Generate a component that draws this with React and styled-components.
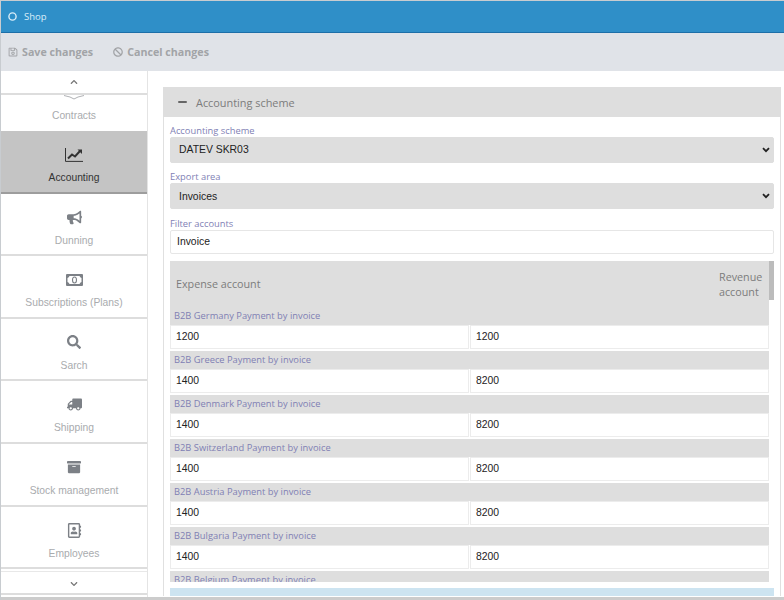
import React from "react";
import styled, { createGlobalStyle } from "styled-components";
import {
  FaRegSave, FaBan, FaChevronUp, FaChevronDown, FaBullhorn,
  FaSearch, FaTruck, FaArchive, FaRegAddressBook,
} from "react-icons/fa";

const Global = createGlobalStyle`
  html, body { margin: 0; padding: 0; background: #fff; }
  * { box-sizing: border-box; }
`;

const selectArrow = `url("data:image/svg+xml,%3Csvg xmlns='http://www.w3.org/2000/svg' width='8' height='6' viewBox='0 0 8 6'%3E%3Cpath d='M1 1.2 L4 4.2 L7 1.2' fill='none' stroke='%23222' stroke-width='1.8'/%3E%3C/svg%3E")`;

const Page = styled.div`
  width: 784px; height: 600px; overflow: hidden; display: flex; flex-direction: column;
  border-top: 1px solid #c8ccd0; border-left: 1px solid #c8ccd0;
  font-family: "Open Sans", sans-serif; background: #fff;
`;
const TitleBar = styled.div`
  height: 32px; flex: none; display: flex; align-items: center; gap: 6px; padding: 0 0 0 6px;
  background: #2f8fc8; border-bottom: 1px solid #1d6fa8; color: #d9edf8; font-size: 9.5px;
`;
const Toolbar = styled.div`
  height: 38px; flex: none; display: flex; align-items: center; gap: 20px; padding: 0 0 1px 7px;
  background: #e0e3e8;
`;
const ToolButton = styled.div`
  display: flex; align-items: center; gap: 4px; color: #a2a4a7; font-size: 10.7px; font-weight: 700;
`;
const Body = styled.div`flex: 1; min-height: 0; display: flex;`;
const Sidebar = styled.div`
  width: 147px; flex: none; display: flex; flex-direction: column; border-right: 1px solid #e4e4e4;
`;
const ArrowButton = styled.div`
  flex: none; height: ${p => p.$h}px; display: flex; align-items: center; justify-content: center;
  color: #777; font-size: 8px; border-bottom: 2px solid #ddd; background: #fff;
  margin-top: ${p => p.$mt || 0}px;
  ${p => p.$mt ? "border-top: 1px solid #e8e8e8; padding-top: 2px;" : ""}
`;
const ClipItem = styled.div`
  flex: none; height: 36px; overflow: hidden; display: flex; flex-direction: column;
  align-items: center; justify-content: space-between; padding-bottom: 10px;
  color: #a9abae; font-family: "Liberation Sans", sans-serif; font-size: 10.3px;
`;
const NavItem = styled.div`
  flex: none; height: 62.6px; display: flex; flex-direction: column; align-items: center;
  padding-top: 15px; gap: 9px; font-family: "Liberation Sans", sans-serif; font-size: 10.3px; line-height: 12px;
  color: ${p => p.$active ? "#333" : "#a9abae"};
  background: ${p => p.$active ? "#c4c4c4" : "#fff"};
  border-bottom: 2px solid ${p => p.$active ? "#9d9d9d" : "#ddd"};
`;
const NavIcon = styled.span`
  height: 17px; display: flex; align-items: center; justify-content: center;
  color: ${p => p.$active ? "#333" : "#7c8086"};
  transform: ${p => p.$flip ? "scaleX(-1)" : "none"};
`;
const Content = styled.div`
  flex: 1; min-width: 0; padding: 16px 3px 1px 15px;
`;
const Panel = styled.div`
  height: 100%; border-left: 1px solid #e0e0e0; border-right: 1px solid #e0e0e0;
  display: flex; flex-direction: column;
`;
const PanelHead = styled.div`
  flex: none; height: 30px; margin-left: -1px; margin-right: -1px; display: flex; align-items: center;
  gap: 9px; padding-left: 15px; background: #dedede; color: #7c7c7c; font-size: 10.9px;
`;
const MinusMark = styled.span`
  width: 9px; height: 2.5px; border-radius: 1px; background: #666;
`;
const PanelBody = styled.div`
  flex: 1; min-height: 0; padding: 6px 6px 0; display: flex; flex-direction: column;
`;
const FieldLabel = styled.label`
  display: block; height: 14px; line-height: 16px; color: #7f7fb5; font-size: 9.33px;
`;
const Field = styled.div`margin-bottom: ${p => p.$mb}px; flex: none;`;
const Select = styled.select`
  display: block; width: 100%; height: 25.6px; padding: 0 4px; appearance: none;
  background: #dedede ${selectArrow} no-repeat right 3px center;
  border: 1px solid #dedede; border-radius: 2px; color: #222;
  font-family: "Liberation Sans", sans-serif; font-size: 10.4px;
  padding-left: 8px;
`;
const TextInput = styled.input`
  display: block; width: 100%; height: 24px; padding: 0 6px; background: #fff;
  border: 1px solid #e6e6e6; border-radius: 2px; color: #222;
  font-family: "Liberation Sans", sans-serif; font-size: 10.4px;
`;
const TableArea = styled.div`flex: none; height: 321px; display: flex; overflow: hidden;`;
const List = styled.div`flex: 1; min-width: 0; overflow: hidden;`;
const ScrollTrack = styled.div`flex: none; width: 5px; background: #fff;`;
const ScrollThumb = styled.div`height: 39px; background: #bcbcbc;`;
const TableHead = styled.div`
  height: 45.5px; display: flex; justify-content: space-between; align-items: flex-start;
  background: #dedede; color: #7c7c7c; font-size: 10.75px; line-height: 14.5px; padding: 0 6px;
`;
const HeadLeft = styled.div`padding-top: 16px;`;
const HeadRight = styled.div`width: 44px; padding-top: 9px;`;
const RowLabel = styled.div`
  height: 18px; padding-left: 4px; line-height: 17px; background: #dedede; color: #8080b4; font-size: 9.33px;
`;
const RowInputs = styled.div`
  display: grid; grid-template-columns: 1fr 1fr; height: 26px; padding-bottom: 2px; gap: 1px;
`;
const CellInput = styled.input`
  display: block; width: 100%; min-width: 0; height: 24px; padding: 0 5px; background: #fff;
  border: 1px solid #ececec; color: #222; font-family: "Liberation Sans", sans-serif; font-size: 10.4px;
`;
const InfoBar = styled.div`flex: none; height: 8.5px; margin-top: 5.5px; background: #cde4f1;`;
const BottomBar = styled.div`flex: none; height: 3px; background: #ccc;`;

const HandshakeEdge = () => (
  <svg width="20" height="5" viewBox="0 0 20 5" fill="none" stroke="#b0b2b5" strokeWidth="1">
    <path d="M0 0.5 L6 2 L10 4 L14 2 L20 0.5" />
  </svg>
);
const LineChart = () => (
  <svg width="18" height="14" viewBox="0 0 18 14" fill="none" stroke="currentColor">
    <path d="M0.5 0 V13.4 H18" strokeWidth="1" />
    <path d="M3 10.5 L7 6.5 L10 8.5 L15 3" strokeWidth="2" />
    <path d="M12.5 1.5 H17 V6 Z" fill="currentColor" stroke="none" />
  </svg>
);
const Money = () => (
  <svg width="17" height="12" viewBox="0 0 17 12">
    <path fillRule="evenodd" fill="currentColor"
      d="M0 1 Q0 0 1 0 H16 Q17 0 17 1 V11 Q17 12 16 12 H1 Q0 12 0 11 Z M3.5 2 Q3 3.5 1.5 4 V8 Q3 8.5 3.5 10 H13.5 Q14 8.5 15.5 8 V4 Q14 3.5 13.5 2 Z" />
    <ellipse cx="8.5" cy="6" rx="2" ry="3" fill="none" stroke="currentColor" strokeWidth="1.1" />
  </svg>
);

const nav = [
  ["Accounting", <LineChart />, true],
  ["Dunning", <FaBullhorn size={15} />],
  ["Subscriptions (Plans)", <Money />],
  ["Sarch", <FaSearch size={14} />],
  ["Shipping", <FaTruck size={15} />, false, true],
  ["Stock management", <FaArchive size={14} />],
  ["Employees", <FaRegAddressBook size={15} />],
];
const rows = [
  ["B2B Germany Payment by invoice", "1200", "1200"],
  ["B2B Greece Payment by invoice", "1400", "8200"],
  ["B2B Denmark Payment by invoice", "1400", "8200"],
  ["B2B Switzerland Payment by invoice", "1400", "8200"],
  ["B2B Austria Payment by invoice", "1400", "8200"],
  ["B2B Bulgaria Payment by invoice", "1400", "8200"],
  ["B2B Belgium Payment by invoice", "1400", "8200"],
];

export default function App() {
  return (
    <Page>
      <Global />
      <TitleBar>
        <svg width="11" height="11" viewBox="0 0 11 11" fill="none" stroke="#d9edf8" strokeWidth="1.4"><circle cx="5.5" cy="5.5" r="3.6" /></svg>
        Shop
      </TitleBar>
      <Toolbar>
        <ToolButton><FaRegSave size={10} />Save changes</ToolButton>
        <ToolButton><FaBan size={10} />Cancel changes</ToolButton>
      </Toolbar>
      <Body>
        <Sidebar>
          <ArrowButton $h={24}><FaChevronUp /></ArrowButton>
          <ClipItem><HandshakeEdge />Contracts</ClipItem>
          {nav.map(([label, icon, active, flip]) => (
            <NavItem key={label} $active={active}>
              <NavIcon $active={active} $flip={flip}>{icon}</NavIcon>
              {label}
            </NavItem>
          ))}
          <ArrowButton $h={24} $mt={2}><FaChevronDown /></ArrowButton>
        </Sidebar>
        <Content>
          <Panel>
            <PanelHead><MinusMark />Accounting scheme</PanelHead>
            <PanelBody>
              <Field $mb={6.7}>
                <FieldLabel>Accounting scheme</FieldLabel>
                <Select defaultValue="DATEV SKR03"><option>DATEV SKR03</option></Select>
              </Field>
              <Field $mb={6.7}>
                <FieldLabel>Export area</FieldLabel>
                <Select defaultValue="Invoices"><option>Invoices</option></Select>
              </Field>
              <Field $mb={7.5}>
                <FieldLabel>Filter accounts</FieldLabel>
                <TextInput readOnly value="Invoice" />
              </Field>
              <TableArea>
                <List>
                  <TableHead>
                    <HeadLeft>Expense account</HeadLeft>
                    <HeadRight>Revenue account</HeadRight>
                  </TableHead>
                  {rows.map(([l, a, b]) => (
                    <div key={l}>
                      <RowLabel>{l}</RowLabel>
                      <RowInputs>
                        <CellInput readOnly value={a} />
                        <CellInput readOnly value={b} />
                      </RowInputs>
                    </div>
                  ))}
                </List>
                <ScrollTrack><ScrollThumb /></ScrollTrack>
              </TableArea>
              <InfoBar />
            </PanelBody>
          </Panel>
        </Content>
      </Body>
      <BottomBar />
    </Page>
  );
}
